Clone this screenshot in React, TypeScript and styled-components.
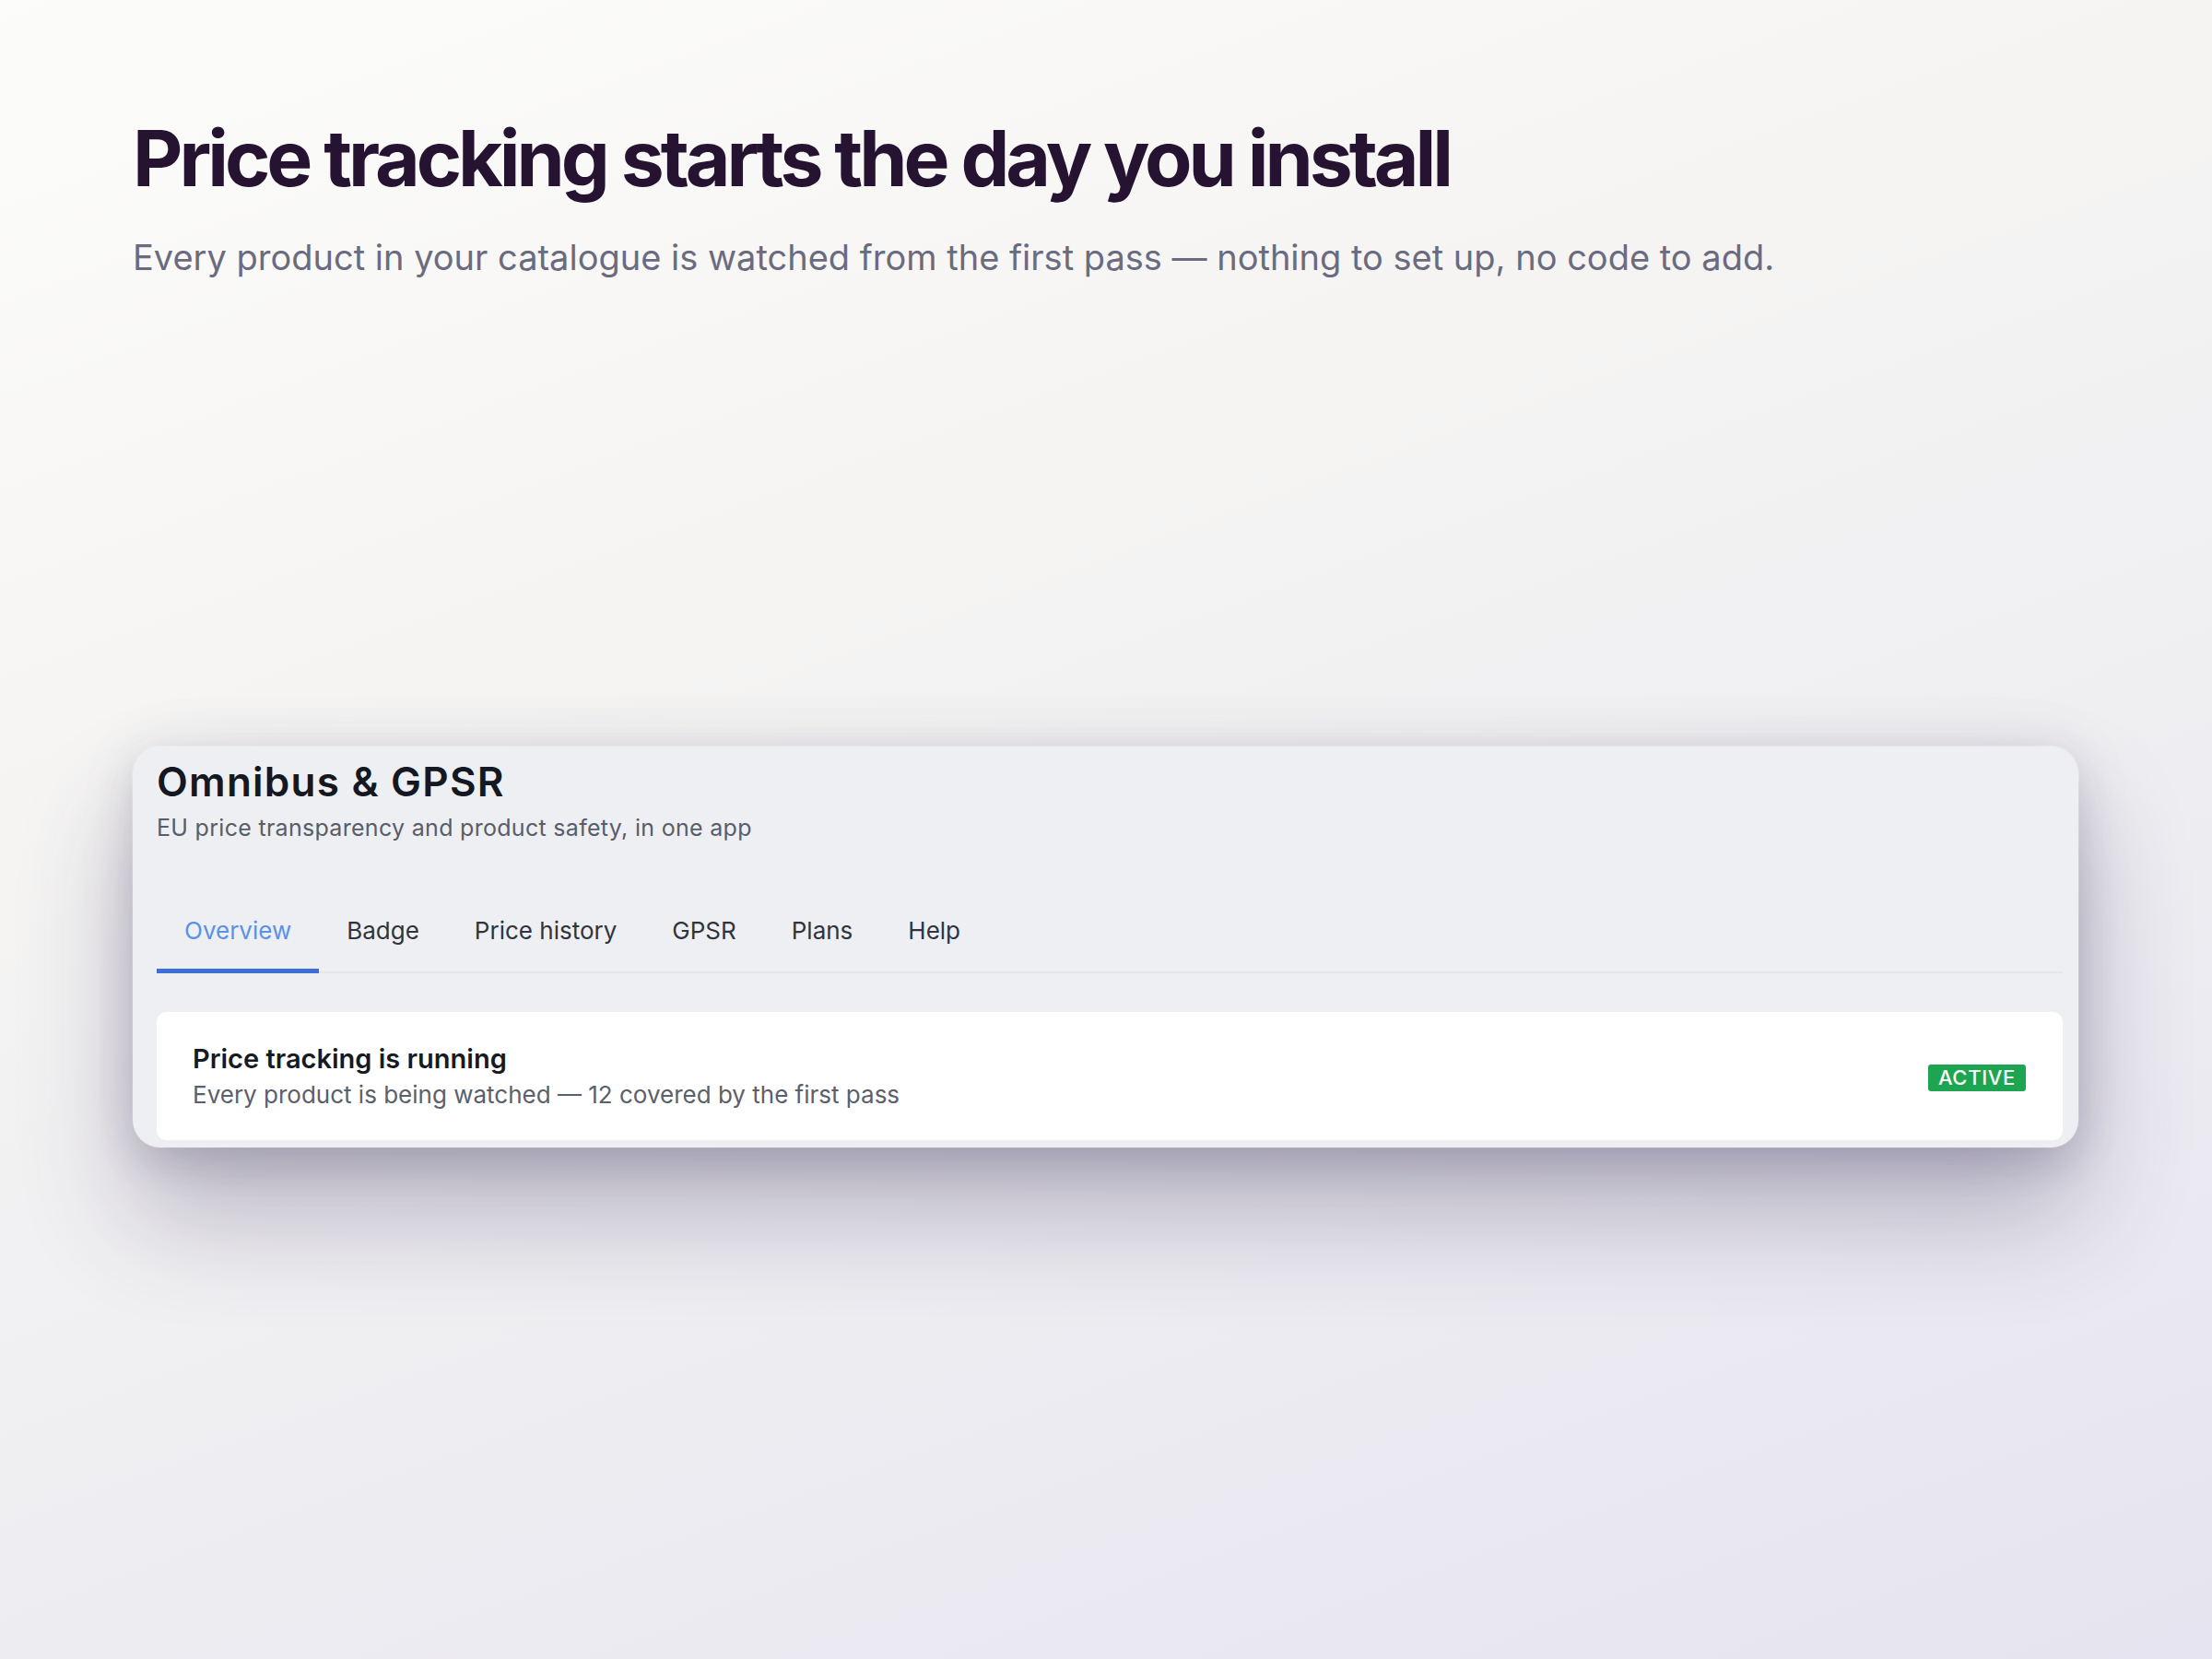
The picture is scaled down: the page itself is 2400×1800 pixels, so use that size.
import styled, { createGlobalStyle } from 'styled-components';

const GlobalStyle = createGlobalStyle`
  html, body {
    margin: 0;
    padding: 0;
  }
  body {
    font-family: Inter, "Noto Sans", "Liberation Sans", sans-serif;
    -webkit-font-smoothing: antialiased;
  }
  * {
    box-sizing: border-box;
  }
`;

const tabs = ['Overview', 'Badge', 'Price history', 'GPSR', 'Plans', 'Help'];

const App = () => {
  return (
    <>
      <GlobalStyle />
      <Page>
        <Hero>
          <Title>Price tracking starts the day you install</Title>
          <Lead>
            Every product in your catalogue is watched from the first pass — nothing to set up, no
            code to add.
          </Lead>
        </Hero>

        <Frame>
          <AppHeader>
            <AppTitle>Omnibus &amp; GPSR</AppTitle>
            <AppSubtitle>EU price transparency and product safety, in one app</AppSubtitle>
          </AppHeader>

          <TabBar>
            {tabs.map((tab, index) => (
              <Tab key={tab} active={index === 0}>
                {tab}
              </Tab>
            ))}
          </TabBar>

          <StatusPanel>
            <StatusText>
              <StatusTitle>Price tracking is running</StatusTitle>
              <StatusDescription>
                Every product is being watched — 12 covered by the first pass
              </StatusDescription>
            </StatusText>
            <Badge>Active</Badge>
          </StatusPanel>
        </Frame>
      </Page>
    </>
  );
};

const Page = styled.div`
  min-height: 100vh;
  padding: 130px 145px 0 144px;
  background: linear-gradient(160deg, #fcfcfb 0%, #f5f4f3 35%, #eeedf1 65%, #e6e4f0 100%);
`;

const Hero = styled.header`
  display: flex;
  flex-direction: column;
`;

const Title = styled.h1`
  margin: 0;
  font-size: 84px;
  line-height: 1;
  font-weight: 700;
  letter-spacing: -0.048em;
  color: #261331;
`;

const Lead = styled.p`
  margin: 43px 0 0;
  font-size: 38px;
  line-height: 1.2;
  font-weight: 400;
  letter-spacing: 0;
  color: #6b6b80;
`;

const Frame = styled.section`
  margin-top: 507px;
  width: 2111px;
  padding: 12px 17px 8px 26px;
  background: #eeeff3;
  border-radius: 30px;
  box-shadow:
    0 70px 120px rgba(60, 50, 90, 0.32),
    0 16px 40px rgba(60, 50, 90, 0.14),
    0 0 70px rgba(60, 50, 90, 0.07),
    0 0 0 1px rgba(255, 255, 255, 0.6);
`;

const AppHeader = styled.div`
  display: flex;
  flex-direction: column;
  gap: 8px;
`;

const AppTitle = styled.h2`
  margin: 0;
  font-size: 44px;
  line-height: 1.2;
  font-weight: 600;
  letter-spacing: 0.028em;
  color: #141823;
`;

const AppSubtitle = styled.p`
  margin: 0;
  font-size: 25px;
  line-height: 1.3;
  letter-spacing: 0.012em;
  color: #585d69;
`;

const TabBar = styled.nav`
  display: flex;
  margin-top: 78px;
  border-bottom: 2px solid #e5e6eb;
`;

const Tab = styled.div<{ active?: boolean }>`
  padding: 0 30px 24px;
  margin-bottom: -2px;
  font-size: 26px;
  line-height: 1.3;
  color: ${(props) => (props.active ? '#5b91e6' : '#30343d')};
  border-bottom: 5px solid ${(props) => (props.active ? '#3e6fd6' : 'transparent')};
`;

const StatusPanel = styled.div`
  display: flex;
  align-items: center;
  justify-content: space-between;
  margin-top: 42px;
  padding: 32px 40px 32px 39px;
  background: #ffffff;
  border-radius: 10px;
`;

const StatusText = styled.div`
  display: flex;
  flex-direction: column;
  gap: 4px;
`;

const StatusTitle = styled.div`
  font-size: 29px;
  line-height: 1.3;
  font-weight: 600;
  color: #161a22;
`;

const StatusDescription = styled.div`
  font-size: 26px;
  line-height: 1.3;
  color: #5b606b;
`;

const Badge = styled.span`
  display: inline-flex;
  align-items: center;
  height: 29px;
  padding: 0 11px;
  margin-top: 4px;
  background: #1ea551;
  border-radius: 3px;
  color: #ffffff;
  font-size: 22px;
  font-weight: 500;
  letter-spacing: 0.03em;
  text-transform: uppercase;
`;

export default App;
